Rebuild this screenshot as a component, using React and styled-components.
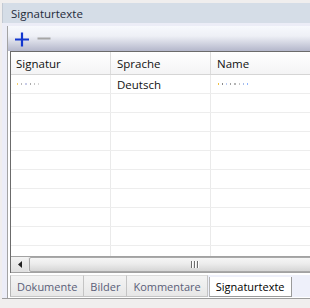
import React from 'react';
import styled, { createGlobalStyle } from 'styled-components';

const GlobalStyle = createGlobalStyle`
  html, body {
    margin: 0;
    padding: 0;
    background: #f0eeee;
  }
  body {
    font-family: "Open Sans", "Noto Sans", sans-serif;
    font-size: 11px;
  }
`;

const Page = styled.div`
  width: 310px;
  height: 308px;
  overflow: hidden;
  background: #f0eeee;
`;

const Window = styled.div`
  height: 295px;
  margin-top: 3px;
  margin-left: 2px;
  background: #ecedf7;
  border-bottom: 1px solid #9d9d9d;
  display: flex;
  flex-direction: column;
`;

const TitleBar = styled.div`
  height: 20px;
  flex: none;
  display: flex;
  align-items: center;
  padding-left: 8px;
  background: #d5dde7;
  border-left: 1px solid #c2c9d3;
  color: #1f2b3b;
  font-size: 11.5px;
`;

const Panel = styled.div`
  flex: 1;
  margin-top: 3px;
  margin-left: 5px;
  border-left: 1px solid #a3a3a3;
  background: #fff;
  display: flex;
  flex-direction: column;
  min-height: 0;
`;

const Toolbar = styled.div`
  height: 25px;
  flex: none;
  display: flex;
  align-items: center;
  gap: 6px;
  padding-left: 6px;
  background: linear-gradient(#f7f9fd 0%, #eef0f6 40%, #b4b7cb 100%);
`;

const ToolButton = styled.span`
  display: inline-flex;
  width: 16px;
  height: 16px;
`;

const Table = styled.div`
  margin-left: 2px;
  border-top: 1px solid #6b6b6b;
  border-left: 1px solid #6b6b6b;
  display: flex;
  flex-direction: column;
`;

const Row = styled.div`
  display: grid;
  grid-template-columns: 100px 100px 1fr;
  height: ${(p) => (p.$header ? 22 : 18)}px;
  border-bottom: 1px solid ${(p) => (p.$header ? '#d5d5d5' : '#ededed')};
  background: ${(p) => (p.$header ? 'linear-gradient(#ffffff, #f4f4f5)' : '#fff')};
`;

const Cell = styled.div`
  display: flex;
  align-items: center;
  padding-left: ${(p) => (p.$first ? 5 : 6)}px;
  border-right: 1px solid ${(p) => (p.$header ? '#dcdcdc' : '#eaeaea')};
  color: #111;
  font-size: 11.5px;
  white-space: nowrap;
  overflow: hidden;
  &:last-child {
    border-right: none;
  }
`;

const Body = styled.div`
  height: 181px;
  overflow: hidden;
`;

const Redacted = styled.span`
  display: inline-flex;
  align-items: center;
  gap: 3px;
  height: 4px;
  margin-left: 1px;
`;

const Dot = styled.span`
  width: ${(p) => p.$w || 1}px;
  height: 2px;
  background: ${(p) => p.$c};
`;

const ScrollBar = styled.div`
  height: 15px;
  border-top: 1px solid #a2a2a2;
  border-bottom: 1px solid #a2a2a2;
  background: #e9e9e9;
  display: flex;
  align-items: stretch;
  overflow: hidden;
`;

const ArrowButton = styled.div`
  width: 17px;
  flex: none;
  display: flex;
  align-items: center;
  justify-content: center;
  background: linear-gradient(#f3f3f3, #e0e0e0);
`;

const Thumb = styled.div`
  flex: none;
  width: 328px;
  margin-left: 1px;
  border: 1px solid #a9a9a9;
  border-radius: 2px;
  background: linear-gradient(#f6f6f6 0%, #ececec 45%, #d6d6d6 100%);
  display: flex;
  align-items: center;
  justify-content: center;
  gap: 2px;
`;

const Grip = styled.span`
  width: 1px;
  height: 7px;
  background: #6f6f6f;
  box-shadow: 1px 0 0 #fff;
`;

const TabStrip = styled.div`
  margin-top: 2px;
  margin-left: 2px;
  height: 22px;
  display: flex;
  align-items: stretch;
  background: #eef0fa;
`;

const Tab = styled.div`
  display: flex;
  align-items: center;
  padding: 0 6px;
  margin-top: ${(p) => (p.$active ? 2 : 0)}px;
  margin-left: ${(p) => (p.$active ? 1 : 0)}px;
  color: ${(p) => (p.$active ? '#000' : '#5a5e78')};
  background: ${(p) => (p.$active ? '#fff' : 'linear-gradient(#f4f4f4, #e7e7e7)')};
  border: 1px solid ${(p) => (p.$active ? '#9a9a9a' : '#c4c4c4')};
  border-top: ${(p) => (p.$active ? 'none' : '1px solid #dcdcdc')};
  border-left: ${(p) => (p.$first || p.$active ? '1px solid #b5b5b5' : 'none')};
  white-space: nowrap;
`;

const rows = [
  { lang: 'Deutsch', filled: true },
  ...Array.from({ length: 9 }, () => ({})),
];

function PlusIcon() {
  return (
    <svg width="16" height="16" viewBox="0 0 16 16">
      <path d="M1 8.5h14M8 1.5v14" stroke="#1237cf" strokeWidth="2.2" fill="none" />
    </svg>
  );
}

function MinusIcon() {
  return (
    <svg width="16" height="16" viewBox="0 0 16 16">
      <path d="M1.5 7.5h13" stroke="#a6a6a6" strokeWidth="2" fill="none" />
    </svg>
  );
}

function App() {
  return (
    <Page>
      <GlobalStyle />
      <Window>
        <TitleBar>Signaturtexte</TitleBar>
        <Panel>
          <Toolbar>
            <ToolButton><PlusIcon /></ToolButton>
            <ToolButton><MinusIcon /></ToolButton>
          </Toolbar>
          <Table>
            <Row $header>
              <Cell $header $first>Signatur</Cell>
              <Cell $header>Sprache</Cell>
              <Cell $header>Name</Cell>
            </Row>
            <Body>
              {rows.map((r, i) => (
                <Row key={i}>
                  <Cell $first>
                    {r.filled && (
                      <Redacted>
                        <Dot $c="#f2cf6e" />
                        <Dot $c="#b9b9b9" />
                        <Dot $c="#c8cce8" $w={2} />
                        <Dot $c="#aaaaaa" />
                        <Dot $c="#c4c4c4" />
                        <Dot $c="#d6d6d6" />
                      </Redacted>
                    )}
                  </Cell>
                  <Cell>{r.lang}</Cell>
                  <Cell>
                    {r.filled && (
                      <Redacted>
                        <Dot $c="#f0c040" />
                        <Dot $c="#8a8a8a" />
                        <Dot $c="#b8c8f0" />
                        <Dot $c="#a0a0a0" />
                        <Dot $c="#b4b4b4" $w={2} />
                        <Dot $c="#c4c4c4" />
                        <Dot $c="#a8bce8" />
                        <Dot $c="#8eb4ff" />
                      </Redacted>
                    )}
                  </Cell>
                </Row>
              ))}
            </Body>
            <ScrollBar>
              <ArrowButton>
                <svg width="4" height="7" viewBox="0 0 4 7">
                  <path d="M4 0v7L0 3.5z" fill="#222" />
                </svg>
              </ArrowButton>
              <Thumb>
                <Grip />
                <Grip />
                <Grip />
              </Thumb>
            </ScrollBar>
          </Table>
          <TabStrip>
            <Tab $first>Dokumente</Tab>
            <Tab>Bilder</Tab>
            <Tab>Kommentare</Tab>
            <Tab $active>Signaturtexte</Tab>
          </TabStrip>
        </Panel>
      </Window>
    </Page>
  );
}

export default App;
